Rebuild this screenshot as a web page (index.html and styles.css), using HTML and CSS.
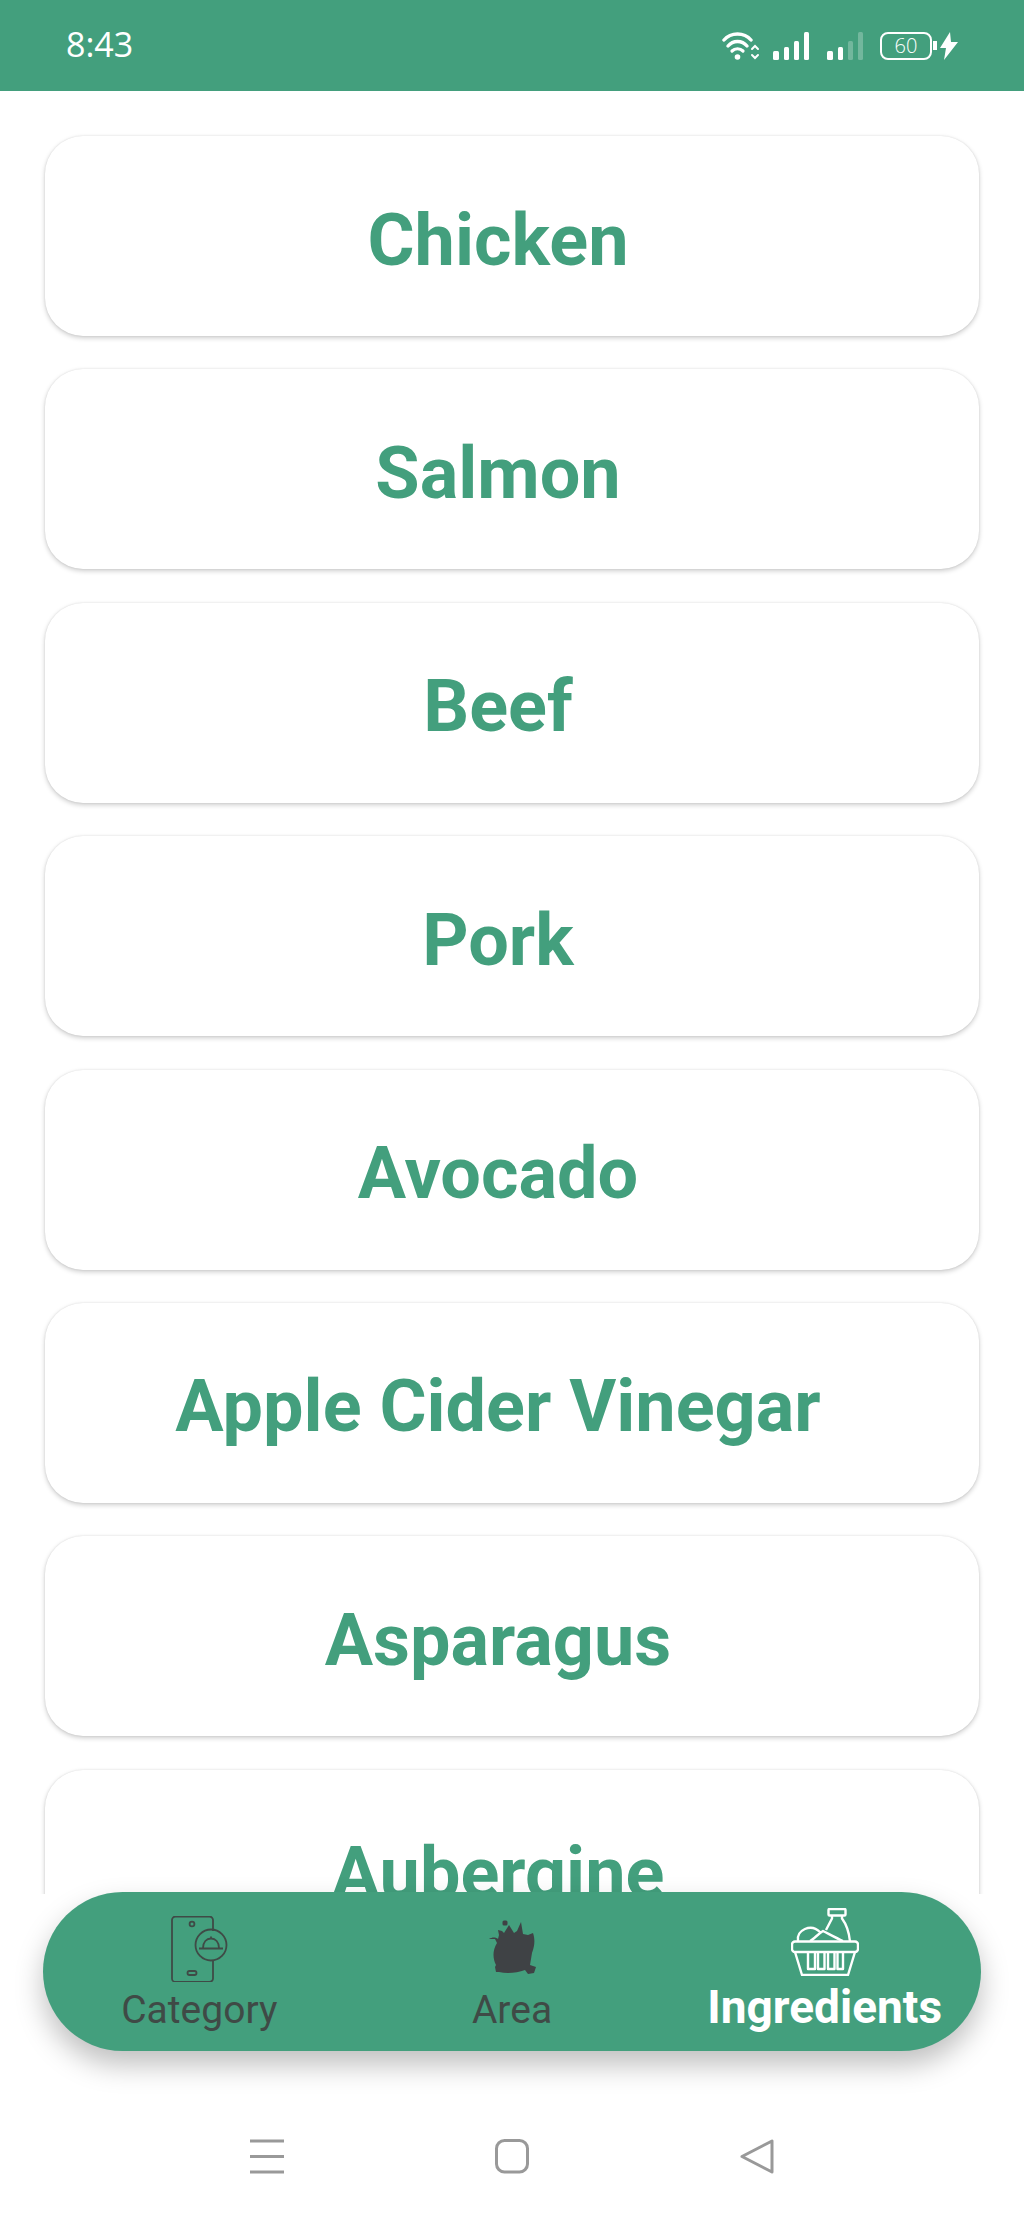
FILE: index.html
```html
<!DOCTYPE html>
<html lang="en">
<head>
  <meta charset="UTF-8">
  <meta name="viewport" content="width=device-width, initial-scale=1.0">
  <title>Ingredients</title>
  <link rel="stylesheet" href="styles.css">
</head>
<body>
  <div class="status-bar">
    <span class="time">8:43</span>
    <div class="status-icons">
      <svg class="wifi" width="38" height="28" viewBox="0 0 38 28" fill="none" stroke="#fff" stroke-linecap="round">
        <path d="M2 8C9 0 22 0 29 8" stroke-width="3.4"/>
        <path d="M6 14C11 8 20 8 25 14" stroke-width="3.4"/>
        <path d="M10 19C13 16 18 16 21 19" stroke-width="3.2"/>
        <circle cx="15.5" cy="25" r="2.8" fill="#fff" stroke="none"/>
        <path d="M30 17l3-3 3 3M30 23l3 3 3-3" stroke-width="2"/>
      </svg>
      <svg class="signal" width="36" height="28" viewBox="0 0 36 28" fill="#fff">
        <rect x="0" y="19" width="6" height="9" rx="1.5"/>
        <rect x="11" y="15" width="5" height="13" rx="1.5"/>
        <rect x="21" y="9" width="5" height="19" rx="1.5"/>
        <rect x="31" y="0" width="5" height="28" rx="1.5"/>
      </svg>
      <svg class="signal" width="36" height="28" viewBox="0 0 36 28" fill="#fff">
        <rect x="0" y="19" width="6" height="9" rx="1.5"/>
        <rect x="11" y="15" width="5" height="13" rx="1.5"/>
        <rect x="21" y="9" width="5" height="19" rx="1.5" opacity=".25"/>
        <rect x="31" y="0" width="5" height="28" rx="1.5" opacity=".25"/>
      </svg>
      <div class="battery"><span class="battery-level">60</span></div>
      <div class="battery-tip"></div>
      <svg class="bolt" width="18" height="28" viewBox="0 0 18 28" fill="#fff">
        <path d="M10 0L0 16h6L4 28 18 10h-7z"/>
      </svg>
    </div>
  </div>

  <div class="list">
    <div class="card">Chicken</div>
    <div class="card">Salmon</div>
    <div class="card">Beef</div>
    <div class="card">Pork</div>
    <div class="card">Avocado</div>
    <div class="card">Apple Cider Vinegar</div>
    <div class="card">Asparagus</div>
    <div class="card">Aubergine</div>
  </div>

  <nav class="bottom-nav">
    <div class="nav-item">
      <svg class="nav-icon" width="60" height="66" viewBox="0 0 60 66" fill="none" stroke="#3f4a46" stroke-width="1.8">
        <path d="M44 15V4a3.500 3.500 0 0 0-3.500-3.500h-34A3.500 3.500 0 0 0 3 4v58.500A3.500 3.500 0 0 0 6.500 66h34a3.500 3.500 0 0 0 3.500-3.500V44"/>
        <circle cx="23" cy="8" r="2.400"/>
        <rect x="18.500" y="55" width="9" height="4" rx="2"/>
        <circle cx="42" cy="29" r="15.500"/>
        <path d="M34 32c0-6 3.500-9.500 8-9.500s8 3.500 8 9.500M30 32.500h24M42 22.500v-2"/>
      </svg>
      <span class="nav-label">Category</span>
    </div>
    <div class="nav-item">
      <svg class="nav-icon" width="60" height="66" viewBox="0 0 60 66" fill="#3f4245">
        <rect x="20.500" y="4.500" width="5" height="5" rx="1.500"/>
        <path d="M7 23c3-2 7-2 9 0l1-4-1-5 4 1 2 2 5-8 5 8 3-2 4-9 2 12 5 1 5-2c2 6 2 12-1 20l-2 12 6 2-2 6-6 1-3-4c-8 3-18 4-26 2l-3 0-1-5 1-2c-3-6-4-14 1-22l-2-4-5 0z"/>
      </svg>
      <span class="nav-label">Area</span>
    </div>
    <div class="nav-item active">
      <svg class="nav-icon" width="68" height="68" viewBox="0 0 68 68" fill="none" stroke="#fff" stroke-width="2.400" stroke-linejoin="round">
        <rect x="37.500" y="1" width="17" height="6.500" rx="1"/>
        <path d="M41 7.500v3L35 22M51 7.500v3c3 4 7 13 8 23"/>
        <path d="M7 33c-2-11 13-18 22-9M19 33c4-2 8-7 13-10 6 3 13 7 20 10"/>
        <rect x="1" y="33.500" width="66" height="10.500" rx="3"/>
        <path d="M4 44l7 23h46l7-23"/>
        <path d="M17 44v17h7V44M27 44v17h6.500V44M37 44v17h6.500V44M46.500 44v17H52V44"/>
      </svg>
      <span class="nav-label">Ingredients</span>
    </div>
  </nav>

  <div class="system-nav">
    <svg width="34" height="36" viewBox="0 0 34 36" stroke="#999" stroke-width="3">
      <path d="M0 2h34M0 17.500h34M0 33h34"/>
    </svg>
    <svg width="34" height="36" viewBox="0 0 34 36" fill="none" stroke="#999" stroke-width="3">
      <rect x="1.500" y="1.500" width="31" height="31.500" rx="8"/>
    </svg>
    <svg width="34" height="36" viewBox="0 0 34 36" fill="none" stroke="#999" stroke-width="3" stroke-linejoin="round">
      <path d="M32 2v31L2 17.500z"/>
    </svg>
  </div>
</body>
</html>
```

FILE: styles.css
```css
* {
  box-sizing: border-box;
}

html,
body {
  margin: 0;
  height: 100%;
}

body {
  display: flex;
  flex-direction: column;
  height: 2219px;
  overflow: hidden;
  background-color: #fff;
  font-family: Roboto, "Liberation Sans", sans-serif;
}

.status-bar {
  display: flex;
  align-items: center;
  justify-content: space-between;
  flex: 0 0 91px;
  padding: 0 66px;
  background-color: #439f7d;
  color: #fff;
}

.time {
  padding-bottom: 4px;
  font-family: "Open Sans", sans-serif;
  font-size: 34px;
  font-weight: 400;
}

.status-icons {
  display: flex;
  align-items: center;
}

.signal {
  margin-left: 13px;
}

.signal + .signal {
  margin-left: 18px;
}

.battery {
  display: flex;
  align-items: center;
  justify-content: center;
  width: 52px;
  height: 28px;
  margin-left: 17px;
  border: 2px solid #fff;
  border-radius: 8px;
}

.battery-level {
  font-family: "Open Sans", sans-serif;
  font-size: 20px;
  font-weight: 300;
}

.battery-tip {
  width: 4px;
  height: 9px;
  margin-left: 1px;
  background-color: #fff;
}

.bolt {
  margin-left: 3px;
}

.list {
  display: flex;
  flex-direction: column;
  flex: 0 0 1803px;
  gap: 33.4px;
  overflow: hidden;
  padding: 45px 45px 0;
}

.card {
  display: flex;
  align-items: center;
  justify-content: center;
  flex: 0 0 200px;
  padding: 8px 28px 0 0;
  border-radius: 38px;
  background-color: #fff;
  box-shadow: 0 2px 5px rgba(0, 0, 0, 0.2), 0 0 2px rgba(0, 0, 0, 0.1);
  color: #439f7d;
  font-size: 72px;
  font-weight: 700;
}

.bottom-nav {
  display: flex;
  flex: 0 0 159px;
  margin: -2px 43px 0;
  border-radius: 80px;
  background-color: #439f7d;
  box-shadow: 0 14px 28px rgba(0, 0, 0, 0.25);
}

.nav-item {
  display: flex;
  flex: 1;
  flex-direction: column;
  align-items: center;
  padding-top: 24px;
  color: #3f4a46;
  font-size: 39px;
}

.nav-label {
  margin-top: 5px;
}

.nav-item.active {
  padding-top: 16px;
  color: #fff;
  font-size: 46px;
  font-weight: 700;
}

.active .nav-label {
  margin-top: 4px;
}

.nav-icon {
  display: block;
  flex: 0 0 auto;
}

.system-nav {
  display: flex;
  align-items: center;
  gap: 211px;
  margin-top: 88px;
  padding-left: 250px;
}
```
